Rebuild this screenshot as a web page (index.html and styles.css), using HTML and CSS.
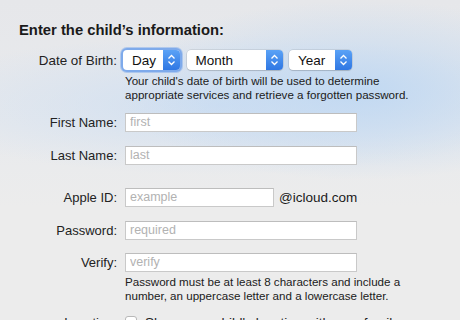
FILE: index.html
```html
<!DOCTYPE html>
<html lang="en">
<head>
    <meta charset="UTF-8">
    <meta name="viewport" content="width=device-width, initial-scale=1.0">
    <title>Add a Child</title>
    <link rel="stylesheet" href="styles.css">
</head>
<body>

    <div class="panel">
        <div class="title">Enter the child’s information:</div>

        <div class="row row-date">
            <label class="label">Date of Birth:</label>
            <div class="popup focused">
                <span class="popup-text">Day</span>
                <span class="stepper"><svg width="9" height="12" viewBox="0 0 9 12"><path d="M1.5 4.5 L4.5 1.5 L7.5 4.5 M1.5 7.5 L4.5 10.5 L7.5 7.5" fill="none" stroke="#fff" stroke-width="1.3"/></svg></span>
            </div>
            <div class="popup popup-month">
                <span class="popup-text">Month</span>
                <span class="stepper"><svg width="9" height="12" viewBox="0 0 9 12"><path d="M1.5 4.5 L4.5 1.5 L7.5 4.5 M1.5 7.5 L4.5 10.5 L7.5 7.5" fill="none" stroke="#fff" stroke-width="1.3"/></svg></span>
            </div>
            <div class="popup popup-year">
                <span class="popup-text">Year</span>
                <span class="stepper"><svg width="9" height="12" viewBox="0 0 9 12"><path d="M1.5 4.5 L4.5 1.5 L7.5 4.5 M1.5 7.5 L4.5 10.5 L7.5 7.5" fill="none" stroke="#fff" stroke-width="1.3"/></svg></span>
            </div>
        </div>
        <div class="note note-date">Your child's date of birth will be used to determine<br>appropriate services and retrieve a forgotten password.</div>

        <div class="row row-first">
            <label class="label">First Name:</label>
            <input class="field" type="text" placeholder="first">
        </div>
        <div class="row row-last">
            <label class="label">Last Name:</label>
            <input class="field" type="text" placeholder="last">
        </div>

        <div class="row row-id">
            <label class="label">Apple ID:</label>
            <input class="field field-short" type="text" placeholder="example">
            <span class="domain">@icloud.com</span>
        </div>
        <div class="row row-password">
            <label class="label">Password:</label>
            <input class="field" type="password" placeholder="required">
        </div>
        <div class="row row-verify">
            <label class="label">Verify:</label>
            <input class="field" type="password" placeholder="verify">
        </div>
        <div class="note note-password">Password must be at least 8 characters and include a<br>number, an uppercase letter and a lowercase letter.</div>

        <div class="row row-location">
            <label class="label">Location:</label>
            <span class="checkbox"></span>
            <span class="check-text">Share your child's location with your family</span>
        </div>
    </div>

</body>
</html>
```
FILE: styles.css
```css
html, body {
    height: 100%;
}
body {
    margin: 0;
    padding: 0;
    overflow: hidden;
    font-family: "Liberation Sans", Arial, sans-serif;
    color: #1e1e1e;
    background-color: #ececec;
    background-image:
        radial-gradient(ellipse 240px 90px at 360px 90px, rgba(192, 216, 242, 0.95), rgba(192, 216, 242, 0)),
        radial-gradient(ellipse 320px 70px at 220px 105px, rgba(205, 222, 242, 0.85), rgba(205, 222, 242, 0)),
        linear-gradient(180deg, #e6e7ea 0%, #e8eaed 40%, #ececec 65%, #ececec 100%);
}
.panel {
    display: flex;
    flex-direction: column;
    padding: 22px 0 0 19px;
}
.title {
    font-size: 14.8px;
    font-weight: bold;
    line-height: 16px;
    color: #1a1a1a;
}
.row {
    display: flex;
    align-items: center;
    height: 20px;
}
.label {
    width: 98px;
    margin-right: 8px;
    text-align: right;
    font-size: 13px;
    color: #222;
    flex-shrink: 0;
}
.row-date {
    margin-top: 11px;
    height: 22px;
}
.row-date .label {
    margin-right: 6px;
    font-size: 13.4px;
}
.popup {
    display: flex;
    align-items: center;
    height: 20px;
    background: #fff;
    border-radius: 4px;
    box-shadow: 0 0 0 0.5px rgba(0, 0, 0, 0.15), 0 1px 1px rgba(0, 0, 0, 0.12);
    margin-right: 6.5px;
    box-sizing: border-box;
    width: 57px;
}
.popup.focused {
    box-shadow: 0 0 0 2px #7eaaeb, 0 0 0 3px rgba(126, 170, 235, 0.5);
}
.popup-month {
    width: 96px;
}
.popup-year {
    width: 63px;
}
.popup-text {
    flex: 1;
    padding-left: 9px;
    font-size: 13.5px;
    color: #111;
}
.stepper {
    display: flex;
    align-items: center;
    justify-content: center;
    width: 17px;
    height: 100%;
    border-radius: 0 4px 4px 0;
    background: linear-gradient(180deg, #5aa2f6 0%, #2f77e3 100%);
}
.note {
    margin-top: 3px;
    margin-left: 106px;
    font-size: 11.6px;
    line-height: 14px;
    color: #202020;
}
.row-first {
    margin-top: 10px;
}
.row-last {
    margin-top: 13px;
}
.row-id {
    margin-top: 22px;
}
.row-password {
    margin-top: 13px;
}
.row-verify {
    margin-top: 12px;
}
.field {
    width: 232px;
    height: 19px;
    box-sizing: border-box;
    margin: 0;
    padding: 0 4px;
    border: 1px solid #c9c9c9;
    border-top-color: #bdbdbd;
    background: #fff;
    font-family: "Liberation Sans", Arial, sans-serif;
    font-size: 12.5px;
    outline: none;
}
.field::placeholder {
    color: #b2b2b2;
}
.field-short {
    width: 149px;
}
.domain {
    margin-left: 5px;
    font-size: 13.5px;
    color: #1a1a1a;
}
.row-location {
    margin-top: 9px;
}
.checkbox {
    width: 12px;
    height: 12px;
    background: #fff;
    border: 1px solid #b8b8b8;
    border-radius: 3px;
    box-sizing: border-box;
}
.check-text {
    margin-left: 8px;
    font-size: 13.5px;
}
```
